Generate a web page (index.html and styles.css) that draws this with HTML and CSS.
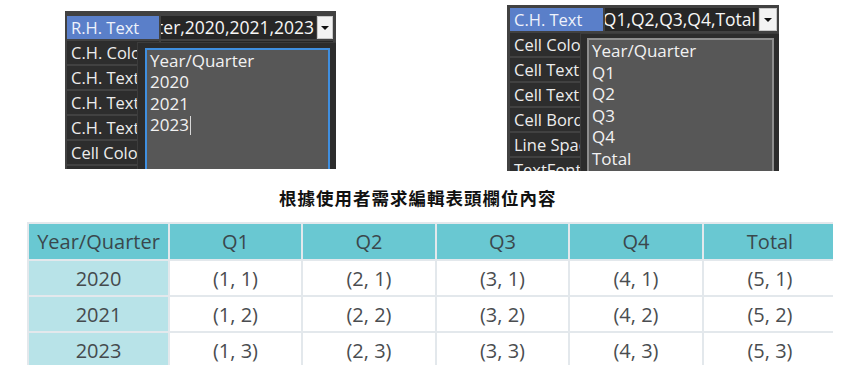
FILE: index.html
```html
<!DOCTYPE html>
<html lang="zh-Hant">
<head>
<meta charset="utf-8">
<title>Header editor</title>
<link rel="stylesheet" href="styles.css">
</head>
<body>
<div class="top">
  <div class="panel panel-left">
    <div class="row"><div class="lbl sel">R.H. Text</div><div class="val"><span>Year/Quarter,2020,2021,2023</span></div><div class="btn"><i class="tri"></i></div></div>
    <div class="row"><div class="lbl">C.H. Color</div><div class="val"></div></div>
    <div class="row"><div class="lbl">C.H. Text Color</div><div class="val"></div></div>
    <div class="row"><div class="lbl">C.H. Text Font</div><div class="val"></div></div>
    <div class="row"><div class="lbl">C.H. Text Size</div><div class="val"></div></div>
    <div class="row"><div class="lbl">Cell Color</div><div class="val"></div></div>
    <div class="row"><div class="lbl">Cell Text</div><div class="val"></div></div>
    <div class="popup popup-left">
      <div class="box box-focus">Year/Quarter<br>2020<br>2021<br>2023<span class="caret"></span></div>
    </div>
  </div>
  <div class="panel panel-right">
    <div class="row"><div class="lbl sel">C.H. Text</div><div class="val"><span>Year/Quarter,Q1,Q2,Q3,Q4,Total</span></div><div class="btn"><i class="tri"></i></div></div>
    <div class="row"><div class="lbl">Cell Color</div><div class="val"></div></div>
    <div class="row"><div class="lbl">Cell Text Color</div><div class="val"></div></div>
    <div class="row"><div class="lbl">Cell Text Size</div><div class="val"></div></div>
    <div class="row"><div class="lbl">Cell Border</div><div class="val"></div></div>
    <div class="row"><div class="lbl">Line Spacing</div><div class="val"></div></div>
    <div class="row"><div class="lbl">TextFont</div><div class="val"></div></div>
    <div class="popup popup-right">
      <div class="box box-plain">Year/Quarter<br>Q1<br>Q2<br>Q3<br>Q4<br>Total</div>
    </div>
  </div>
</div>
<div class="caption">根據使用者需求編輯表頭欄位內容</div>
<div class="table-wrap">
  <table class="grid">
    <colgroup>
      <col class="c-first"><col class="c-a"><col class="c-b"><col class="c-a"><col class="c-b"><col class="c-b">
    </colgroup>
    <thead>
      <tr><th>Year/Quarter</th><th>Q1</th><th>Q2</th><th>Q3</th><th>Q4</th><th>Total</th></tr>
    </thead>
    <tbody>
      <tr><th>2020</th><td>(1, 1)</td><td>(2, 1)</td><td>(3, 1)</td><td>(4, 1)</td><td>(5, 1)</td></tr>
      <tr><th>2021</th><td>(1, 2)</td><td>(2, 2)</td><td>(3, 2)</td><td>(4, 2)</td><td>(5, 2)</td></tr>
      <tr><th>2023</th><td>(1, 3)</td><td>(2, 3)</td><td>(3, 3)</td><td>(4, 3)</td><td>(5, 3)</td></tr>
    </tbody>
  </table>
</div>
</body>
</html>
```
FILE: styles.css
```css
html, body {
  margin: 0;
  padding: 0;
  background: #ffffff;
}
body {
  width: 859px;
  height: 383px;
  overflow: hidden;
  font-family: "Open Sans", "Noto Sans", sans-serif;
}
.top {
  display: flex;
  align-items: flex-start;
  height: 186px;
}
.panel {
  position: relative;
  overflow: hidden;
  background: #414141;
  display: flex;
  flex-direction: column;
  gap: 2px;
  box-sizing: border-box;
}
.panel-left {
  width: 271px;
  height: 158px;
  margin: 11px 0 0 65px;
  padding: 5px 3px 0 2px;
}
.panel-right {
  width: 272px;
  height: 166px;
  margin: 5px 0 0 171px;
  padding: 3px 2px 0 3px;
}
.row {
  display: flex;
  height: 23px;
  flex: none;
  gap: 2px;
}
.lbl {
  width: 92px;
  flex: none;
  background: #2d2d2d;
  color: #ececec;
  font-size: 16.5px;
  line-height: 23px;
  padding-left: 4px;
  box-sizing: border-box;
  white-space: nowrap;
  overflow: hidden;
}
.panel-right .lbl {
  width: 93px;
}
.lbl.sel {
  background: #5a7fc9;
  color: #eef2fb;
}
.val {
  flex: 1;
  background: #262626;
  color: #f6f6f6;
  font-size: 17.5px;
  line-height: 23px;
  display: flex;
  justify-content: flex-end;
  overflow: hidden;
  white-space: nowrap;
}
.val span {
  flex: none;
  padding-right: 2px;
}
.btn {
  width: 16px;
  flex: none;
  margin-left: -1px;
  background: #f3f3f3;
  border: 1px solid #c8c8c8;
  box-sizing: border-box;
  display: flex;
  align-items: center;
  justify-content: center;
}
.panel-right .btn {
  width: 18px;
}
.tri {
  display: block;
  width: 0;
  height: 0;
  border-left: 4px solid transparent;
  border-right: 4px solid transparent;
  border-top: 4px solid #111;
}
.popup {
  position: absolute;
  right: 0;
  bottom: 0;
  background: #2c2c2c;
  border-left: 1px solid #3c3c3c;
  border-top: 1px solid #3c3c3c;
  box-sizing: border-box;
}
.popup-left {
  left: 72px;
  top: 31px;
  padding: 5px 6px 0 7px;
}
.popup-right {
  left: 73px;
  top: 28px;
  padding: 4px 5px 0 6px;
}
.box {
  height: 100%;
  background: #575757;
  color: #f2f2f2;
  font-size: 17px;
  box-sizing: border-box;
  white-space: nowrap;
}
.box-focus {
  border: 2px solid #3f8fe0;
  border-bottom: none;
  line-height: 21.3px;
  padding: 0 3px;
}
.box-plain {
  border: 2px solid #8e8e8e;
  border-bottom: none;
  line-height: 21.6px;
  padding: 0 3px;
}
.caret {
  display: inline-block;
  width: 1px;
  height: 19px;
  background: #d8d8d8;
  vertical-align: -4px;
  margin-left: 1px;
}
.caption {
  height: 24px;
  line-height: 24px;
  padding-left: 279px;
  font-family: "Noto Sans CJK TC", "Noto Sans", sans-serif;
  font-weight: bold;
  font-size: 17.5px;
  letter-spacing: 1px;
  color: #111;
}
.table-wrap {
  margin: 12px 0 0 27px;
  width: 806px;
  height: 143px;
  overflow: hidden;
}
.grid {
  border-collapse: separate;
  border-spacing: 0;
  table-layout: fixed;
  width: 811px;
  border-top: 2px solid #e3e8ec;
  border-left: 2px solid #e3e8ec;
  font-family: "Open Sans", "Noto Sans", sans-serif;
  font-size: 20px;
}
.c-first { width: 141px; }
.c-a { width: 133px; }
.c-b { width: 134px; }
.grid th,
.grid td {
  box-sizing: border-box;
  border-right: 2px solid #e3e8ec;
  border-bottom: 2px solid #e3e8ec;
  text-align: center;
  font-weight: normal;
  padding: 0;
  height: 36px;
  white-space: nowrap;
}
.grid thead th {
  height: 37px;
  background: #69c8d2;
  color: #3a474c;
}
.grid tbody th {
  background: #b8e3e8;
  color: #454a4d;
}
.grid td {
  background: #ffffff;
  color: #4a4d50;
}
```
